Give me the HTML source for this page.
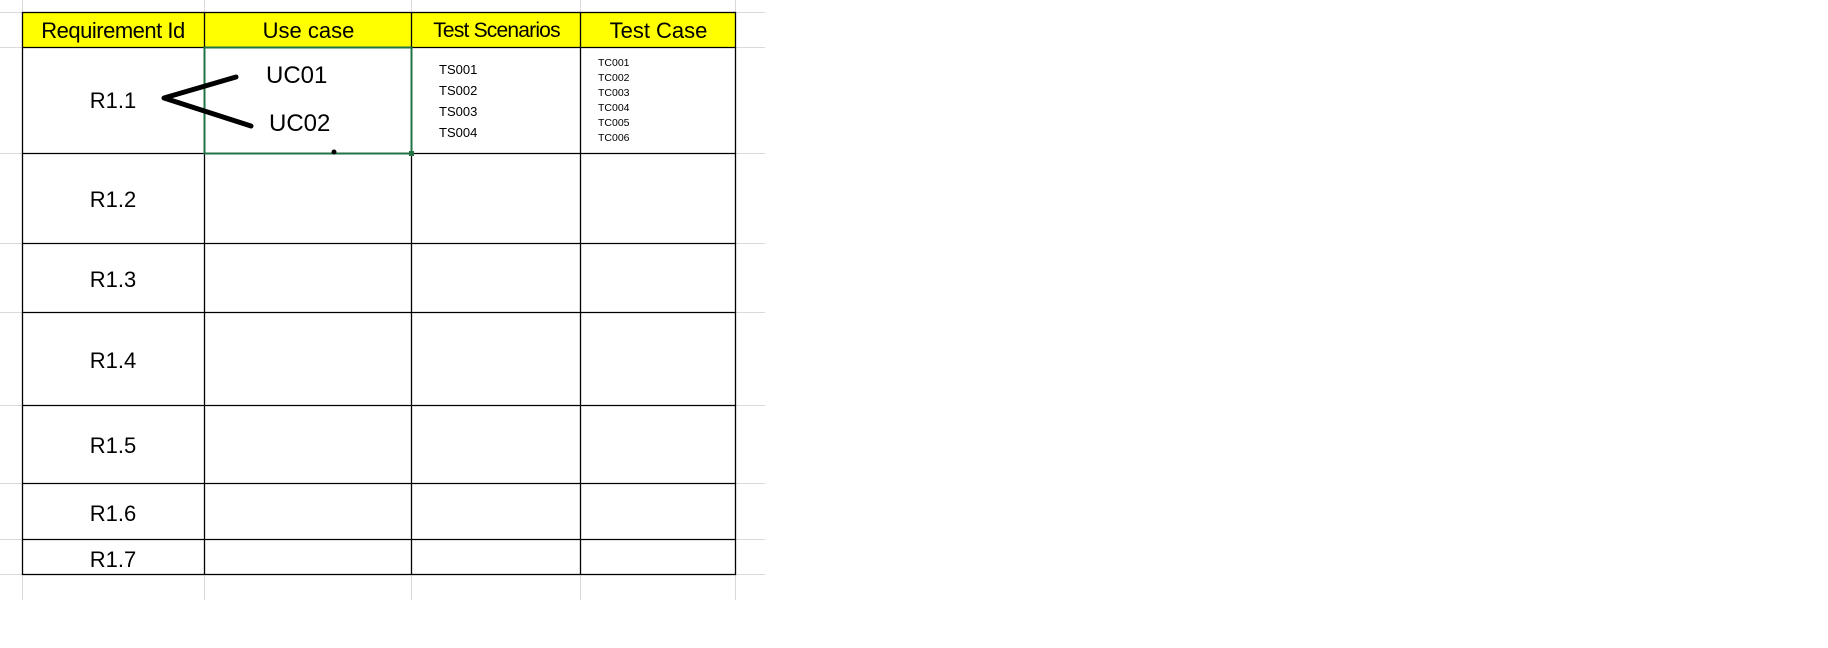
<!DOCTYPE html>
<html><head><style>
body{margin:0;width:1828px;height:648px;background:#fff;position:relative;overflow:hidden;font-family:"Liberation Sans",sans-serif;color:#000}
.a{position:absolute}
.t{position:absolute;white-space:nowrap;line-height:1}
</style></head><body>
<svg class="a" style="left:0;top:0" width="1828" height="648">
<g stroke="#dadada" stroke-width="1">
<line x1="0" y1="12.5" x2="765" y2="12.5"/><line x1="0" y1="47.5" x2="765" y2="47.5"/>
<line x1="0" y1="153.5" x2="765" y2="153.5"/><line x1="0" y1="243.5" x2="765" y2="243.5"/>
<line x1="0" y1="312.5" x2="765" y2="312.5"/><line x1="0" y1="405.5" x2="765" y2="405.5"/>
<line x1="0" y1="483.5" x2="765" y2="483.5"/><line x1="0" y1="539.5" x2="765" y2="539.5"/>
<line x1="0" y1="574.5" x2="765" y2="574.5"/>
<line x1="22.5" y1="0" x2="22.5" y2="600"/><line x1="204.5" y1="0" x2="204.5" y2="600"/>
<line x1="411.5" y1="0" x2="411.5" y2="600"/><line x1="580.5" y1="0" x2="580.5" y2="600"/>
<line x1="735.5" y1="0" x2="735.5" y2="600"/>
</g>
<rect x="22.5" y="12.5" width="713" height="35" fill="#ffff00"/>
<g stroke="#000" stroke-width="1.3" fill="none">
<rect x="22.5" y="12.5" width="713" height="562"/>
<line x1="22" y1="47.5" x2="736" y2="47.5"/><line x1="22" y1="153.5" x2="736" y2="153.5"/>
<line x1="22" y1="243.5" x2="736" y2="243.5"/><line x1="22" y1="312.5" x2="736" y2="312.5"/>
<line x1="22" y1="405.5" x2="736" y2="405.5"/><line x1="22" y1="483.5" x2="736" y2="483.5"/>
<line x1="22" y1="539.5" x2="736" y2="539.5"/>
<line x1="204.5" y1="12" x2="204.5" y2="575"/><line x1="411.5" y1="12" x2="411.5" y2="575"/>
<line x1="580.5" y1="12" x2="580.5" y2="575"/>
</g>
<rect x="204.5" y="47.5" width="207" height="106" fill="none" stroke="#217346" stroke-width="2"/>
<rect x="409" y="151" width="5" height="5" fill="#217346"/>
<polyline points="236,77 164,98 251,126" fill="none" stroke="#000" stroke-width="5" stroke-linecap="round" stroke-linejoin="round"/>
<circle cx="334" cy="152" r="2.5" fill="#000"/>
</svg>
<div class="t" style="left:22px;width:182px;top:20px;text-align:center;font-size:22px;letter-spacing:-0.5px">Requirement Id</div>
<div class="t" style="left:205px;width:207px;top:20px;text-align:center;font-size:22px">Use case</div>
<div class="t" style="left:412px;width:169px;top:20px;text-align:center;font-size:21px;letter-spacing:-0.8px">Test Scenarios</div>
<div class="t" style="left:581px;width:155px;top:20px;text-align:center;font-size:22px">Test Case</div>
<div class="t" style="left:266px;top:64px;font-size:24px">UC01</div>
<div class="t" style="left:269px;top:112px;font-size:24px">UC02</div>
<div class="t" style="left:439px;top:59px;font-size:13px;line-height:21px;white-space:pre">TS001
TS002
TS003
TS004</div>
<div class="t" style="left:598px;top:56px;font-size:10.5px;line-height:15px;white-space:pre">TC001
TC002
TC003
TC004
TC005
TC006</div>
<div class="t" style="left:22px;width:182px;top:90px;text-align:center;font-size:22px">R1.1</div>
<div class="t" style="left:22px;width:182px;top:189px;text-align:center;font-size:22px">R1.2</div>
<div class="t" style="left:22px;width:182px;top:269px;text-align:center;font-size:22px">R1.3</div>
<div class="t" style="left:22px;width:182px;top:350px;text-align:center;font-size:22px">R1.4</div>
<div class="t" style="left:22px;width:182px;top:435px;text-align:center;font-size:22px">R1.5</div>
<div class="t" style="left:22px;width:182px;top:503px;text-align:center;font-size:22px">R1.6</div>
<div class="t" style="left:22px;width:182px;top:549px;text-align:center;font-size:22px">R1.7</div>
</body></html>
